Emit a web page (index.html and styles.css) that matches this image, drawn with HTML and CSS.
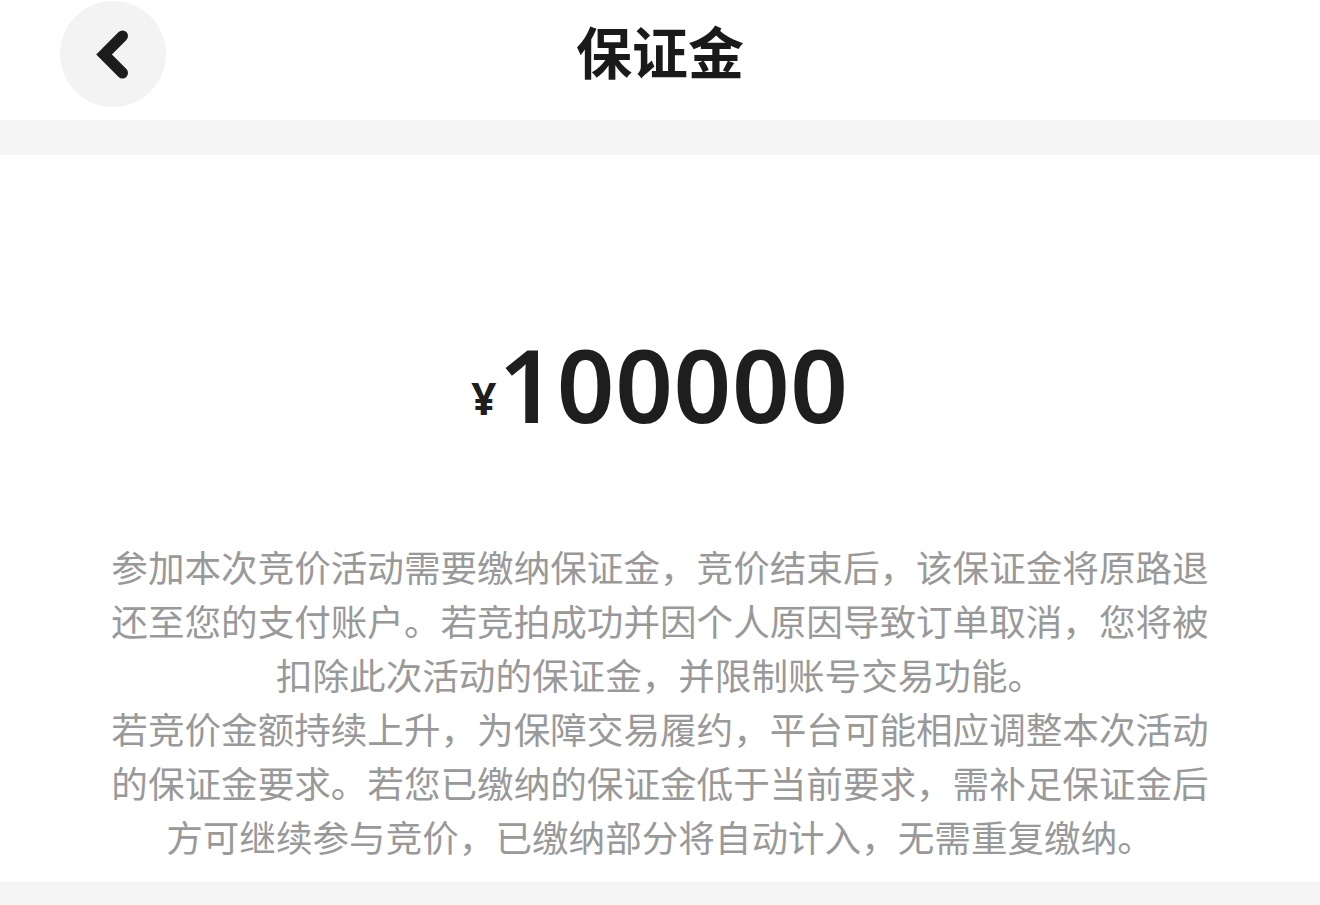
FILE: index.html
```html
<!DOCTYPE html>
<html lang="zh-CN">
<head>
<meta charset="utf-8">
<title>保证金</title>
<link rel="stylesheet" href="styles.css">
</head>
<body>
<div class="page">
  <header class="header">
    <div class="header-bar">
      <button class="back" aria-label="返回">
        <svg width="106" height="106" viewBox="0 0 106 106">
          <polyline points="62.5,35 44,53.5 62.5,72" fill="none" stroke="#1c1c1c" stroke-width="11" stroke-linecap="round" stroke-linejoin="miter"/>
        </svg>
      </button>
      <h1 class="title">保证金</h1>
      <div class="spacer"></div>
    </div>
  </header>
  <div class="band"></div>
  <main class="content">
    <div class="amount"><span class="yen">¥</span><span class="num">100000</span></div>
    <div class="desc">
      <p>参加本次竞价活动需要缴纳保证金，竞价结束后，该保证金将原路退还至您的支付账户。若竞拍成功并因个人原因导致订单取消，您将被扣除此次活动的保证金，并限制账号交易功能。</p>
      <p>若竞价金额持续上升，为保障交易履约，平台可能相应调整本次活动的保证金要求。若您已缴纳的保证金低于当前要求，需补足保证金后方可继续参与竞价，已缴纳部分将自动计入，无需重复缴纳。</p>
    </div>
  </main>
  <div class="band band-bottom"></div>
</div>
</body>
</html>
```

FILE: styles.css
```css
* { box-sizing: border-box; }
html, body {
  margin: 0;
  padding: 0;
  background: #ffffff;
  font-family: "Noto Sans", "Noto Sans CJK SC", sans-serif;
}
.page {
  width: 1320px;
  height: 905px;
  overflow: hidden;
  display: flex;
  flex-direction: column;
}
.header {
  height: 120px;
  background: #ffffff;
  padding: 0 0 12px 0;
}
.header-bar {
  height: 108px;
  display: flex;
  align-items: center;
  justify-content: space-between;
  padding: 0 60px 0 60px;
}
.back {
  width: 106px;
  height: 106px;
  border-radius: 50%;
  border: none;
  padding: 0;
  margin: 0;
  background: #f4f3f4;
  display: flex;
  align-items: center;
  justify-content: center;
}
.back svg { display: block; }
.spacer { width: 106px; height: 106px; }
.title {
  margin: 0;
  font-family: "Noto Sans CJK SC", sans-serif;
  font-weight: 700;
  font-size: 56px;
  line-height: 1;
  color: #1a1a1a;
  letter-spacing: 0;
  transform: translateY(-4px);
}
.band {
  height: 35px;
  background: #f5f5f6;
  flex: none;
}
.band-bottom {
  height: 23px;
}
.content {
  height: 727px;
  flex: none;
  background: #ffffff;
  padding: 179px 110px 18px;
  display: flex;
  flex-direction: column;
}
.amount {
  text-align: center;
  height: 100px;
  line-height: 100px;
  color: #1e1e1e;
  font-family: "Noto Sans", sans-serif;
  white-space: nowrap;
}
.yen {
  font-size: 44px;
  font-weight: 700;
  vertical-align: 8px;
  margin-right: 2px;
}
.num {
  font-size: 101px;
  font-weight: 600;
  letter-spacing: 0.6px;
}
.desc {
  margin-top: 106px;
  color: #999999;
  font-family: "Noto Sans CJK SC", sans-serif;
  font-size: 36.6px;
  line-height: 54px;
  text-align: center;
}
.desc p { margin: 0; }
```
